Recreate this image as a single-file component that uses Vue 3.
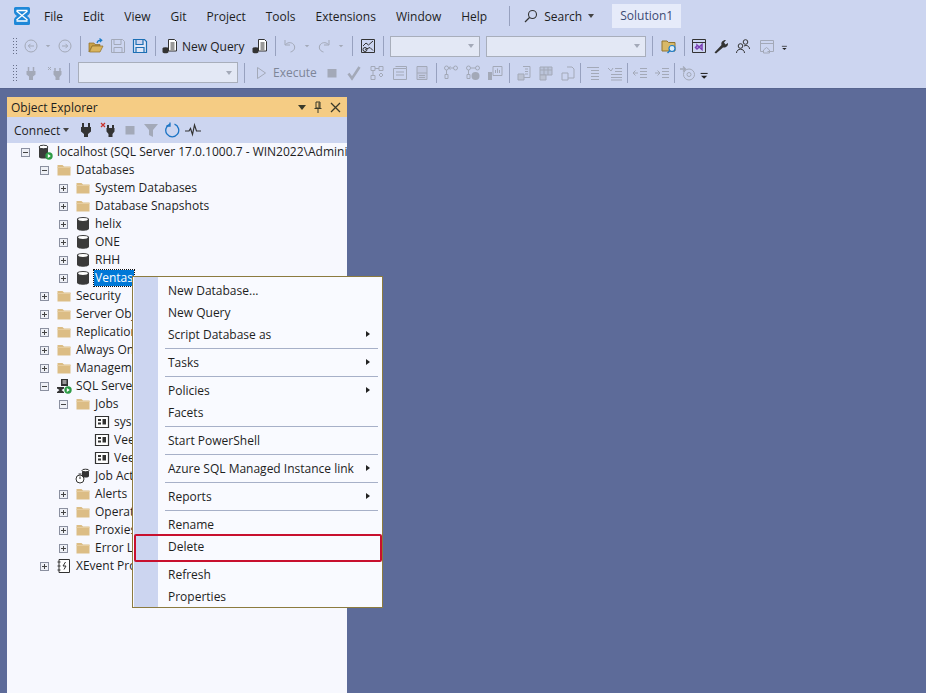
<template>
  <div class="app">
    <header class="chrome">
      <div class="menubar">
        <svg class="logo" width="18" height="20" viewBox="0 0 18 20" v-html="icons.logo"></svg>
        <nav class="menus">
          <span v-for="m in menus" :key="m">{{ m }}</span>
        </nav>
        <i class="vsep"></i>
        <div class="search">
          <svg width="14" height="14" viewBox="0 0 14 14" v-html="icons.search"></svg>
          <span>Search</span>
          <b class="caret"></b>
        </div>
        <div class="solution">Solution1</div>
      </div>
      <div v-for="(row, r) in toolbars" :key="r" class="toolrow">
        <template v-for="(t, n) in row" :key="n">
          <i v-if="t.sep" class="tsep" :style="{ width: t.sep + 'px' }"></i>
          <span v-else-if="t.grip" class="grip"></span>
          <span v-else-if="t.combo" class="combo" :style="{ width: t.combo + 'px', marginLeft: (t.ml || 0) + 'px' }">
            <em>{{ t.label }}</em><b class="caret"></b>
          </span>
          <span v-else-if="t.text" class="ttext" :class="{ dim: t.dim }" :style="{ width: t.w + 'px' }">{{ t.text }}</span>
          <span v-else class="tbtn" :style="{ width: (t.w || 22) + 'px' }">
            <svg :width="t.s || 16" :height="t.s || 16" viewBox="0 0 16 16" v-html="icons[t.i]"></svg>
          </span>
        </template>
      </div>
    </header>

    <section class="explorer">
      <div class="titlebar">
        <span>Object Explorer</span>
        <div class="winbtns">
          <b class="caret dark"></b>
          <svg width="10" height="12" viewBox="0 0 10 12" fill="none" stroke="#3a3a2a"><path d="M3 1h4v6H3zM1.500 7.500h7M5 8v4M6 1.500v5"/></svg>
          <svg width="11" height="11" viewBox="0 0 11 11" fill="none" stroke="#3a3a2a" stroke-width="1.300"><path d="M1 1l9 9M10 1l-9 9"/></svg>
        </div>
      </div>
      <div class="oetools">
        <span class="connect">Connect</span><b class="caret"></b>
        <svg class="oe" style="margin-left: 9px" width="16" height="16" viewBox="0 0 16 16" v-html="icons.plug"></svg>
        <svg class="oe" width="18" height="16" viewBox="0 0 16 16" v-html="icons.plugx"></svg>
        <svg class="oe" width="16" height="16" viewBox="0 0 16 16" v-html="icons.stop"></svg>
        <svg class="oe" width="16" height="16" viewBox="0 0 16 16" v-html="icons.filter"></svg>
        <svg class="oe" width="16" height="16" viewBox="0 0 16 16" v-html="icons.refresh"></svg>
        <svg class="oe" width="16" height="16" viewBox="0 0 16 16" v-html="icons.pulse"></svg>
      </div>
      <ul class="tree">
        <li v-for="n in tree" :key="n.label" class="node" :style="{ paddingLeft: 14 + n.lv * 19 + 'px' }">
          <span class="exp" :class="{ none: !n.exp }">
            <svg v-if="n.exp" width="9" height="9" viewBox="0 0 9 9">
              <path d="M2 4.500h5" stroke="#444" />
              <path v-if="n.exp === 'plus'" d="M4.500 2v5" stroke="#444" />
            </svg>
          </span>
          <svg class="nicon" width="16" height="16" viewBox="0 0 16 16" v-html="icons[n.icon]"></svg>
          <span class="label" :class="{ selected: n.selected }">{{ n.label }}</span>
        </li>
      </ul>
    </section>

    <div class="ctxmenu">
      <template v-for="item in ctx" :key="item.label || item.id">
        <div v-if="item.sep" class="ctxsep"></div>
        <div v-else class="ctxitem">
          <span>{{ item.label }}</span>
          <b v-if="item.sub" class="arrow"></b>
          <div v-if="item.mark" class="redbox"></div>
        </div>
      </template>
    </div>
  </div>
</template>

<script setup>
const menus = ["File", "Edit", "View", "Git", "Project", "Tools", "Extensions", "Window", "Help"];

const g = "#a3a9b8";
const icons = {
  logo: `<path d="M2.500 1h13a1.500 1.500 0 0 1 1.500 1.500V6c0 1.600-1.500 3-3 4 1.500 1 3 2.400 3 4v3.500a1.500 1.500 0 0 1-1.500 1.500h-13A1.500 1.500 0 0 1 1 17.500V14c0-1.600 1.500-3 3-4-1.500-1-3-2.400-3-4V2.500A1.500 1.500 0 0 1 2.500 1z" fill="#1e88d8"/><path d="M3.500 5l11 9M14.500 5l-11 9M3.500 4.500h11M3.500 15h11" stroke="#fff" stroke-width="1.300" fill="none"/>`,
  search: `<circle cx="8.500" cy="5.500" r="4" fill="none" stroke="#333" stroke-width="1.100"/><path d="M5.500 8.500L1 13" stroke="#333" stroke-width="1.300"/>`,
  back: `<circle cx="8" cy="8" r="6" fill="none" stroke="${g}"/><path d="M11 8H5.500M7.500 5.800L5.300 8l2.200 2.200" fill="none" stroke="${g}"/>`,
  forward: `<circle cx="8" cy="8" r="6" fill="none" stroke="${g}"/><path d="M5 8h5.500M8.500 5.800L10.700 8l-2.200 2.200" fill="none" stroke="${g}"/>`,
  drop: `<path d="M5 6.500h6L8 9.500z" fill="#6b7286"/>`,
  dropdim: `<path d="M5 6.500h6L8 9.500z" fill="${g}"/>`,
  open: `<path d="M1 14V5h5l1 1.500h5V8H4L1 14z" fill="#c9a24a" stroke="#8f6f22" stroke-width=".7"/><path d="M1.500 14L4.200 8H15l-3 6z" fill="#d9b45e" stroke="#8f6f22" stroke-width=".7"/><path d="M9 5c.5-1.800 2-2.800 4-2.800M11.500 .5l2.300 1.700-2 2" fill="none" stroke="#1c7cc8" stroke-width="1.200"/>`,
  save: `<path d="M1.500 1.500h11l2 2v11h-13zM4 1.500v5h7v-5M4 14.500v-5h8v5" fill="none" stroke="${g}"/>`,
  saveall: `<path d="M1.500 1.500h11l2 2v11h-13zM4 1.500v5h7v-5M4 14.500v-5h8v5" fill="#dfe6f7" stroke="#1c6fb4" stroke-width="1.200"/>`,
  query: `<path d="M6.500 1.500h6l2 2v9.500h-8z" fill="#fff" stroke="#333"/><path d="M8.500 5h4M8.500 7h4M8.500 9h4M8.500 11h4" stroke="#333"/><ellipse cx="3.500" cy="10.500" rx="3" ry="1.300" fill="#333"/><path d="M.5 10.500v3.500c0 1.800 6 1.800 6 0v-3.500z" fill="#333"/>`,
  undo: `<path d="M3 2v5h5M3.500 6.500c3-3 7-2 8.500 .5s.5 6-3.500 7" fill="none" stroke="${g}"/>`,
  redo: `<path d="M13 2v5H8M12.500 6.500c-3-3-7-2-8.500 .5s-.5 6 3.500 7" fill="none" stroke="${g}"/>`,
  activity: `<path d="M1.500 1.500h13v13h-13z" fill="none" stroke="#333"/><path d="M3 8l3-3 2.500 2L13 3" fill="none" stroke="#333"/><circle cx="5" cy="11.500" r="2" fill="none" stroke="#333"/><path d="M5 11.500l5-2 3 3" fill="none" stroke="#333"/>`,
  find: `<path d="M1 3h5l1.500 1.500H14V13H1z" fill="#d8b968" stroke="#8f7430"/><circle cx="11" cy="10.500" r="3" fill="#dcecfa" stroke="#1c7cc8" stroke-width="1.200"/><path d="M9 12.500l-2.500 2.500" stroke="#1c7cc8" stroke-width="1.400"/>`,
  vs: `<path d="M1.500 1.500h13v13h-13zM1.500 4.500h13" fill="none" stroke="#333"/><path d="M6 7l5 4.500V6.500L6 11 4.500 9.500 6 8z" fill="none" stroke="#7a3fb5" stroke-width="1.500"/>`,
  wrench: `<path d="M1.500 14.500l7-7.500c-.8-2.500 1-5 4.500-5l-2 2.500 1.500 2 2.500-1.500c.3 3-2 5-5 4.500l-7 6z" fill="#333"/>`,
  users: `<circle cx="5.500" cy="8" r="2.300" fill="none" stroke="#333"/><path d="M1.500 15c0-5 8-5 8 0" fill="none" stroke="#333"/><circle cx="10.500" cy="4" r="2.300" fill="none" stroke="#333"/><path d="M9 8c3-1.500 5.500 .5 5.500 3" fill="none" stroke="#333"/>`,
  home: `<path d="M1.500 2.500h13v11h-6M1.500 5.500h13M1.500 2.500v11h3" fill="none" stroke="${g}"/><path d="M4.500 12l3-2.500 3 2.500v3h-6z" fill="none" stroke="${g}"/>`,
  overflow: `<path d="M3 8.500h8" stroke="#222" stroke-width="1.200"/><path d="M3.500 11h7L7 14.500z" fill="#222"/>`,
  plug: `<path d="M5 1v4M11 1v4" stroke="#333" stroke-width="2"/><path d="M3 5h10v4.500L10 12v3H6v-3L3 9.500z" fill="#333"/>`,
  plugdim: `<path d="M5.500 2v4M10.500 2v4" stroke="${g}" stroke-width="1.500"/><path d="M3.500 6h9v3.500L10 11.500V15H6v-3.500L3.500 9.500z" fill="${g}"/>`,
  plugx: `<path d="M1 1l4 4M5 1L1 5" stroke="#c8322c" stroke-width="1.200"/><path d="M8 3v3M13 3v3" stroke="#333" stroke-width="2"/><path d="M6.500 6h8v3.500L12.500 12v3h-4v-3L6.500 9.500z" fill="#333"/>`,
  plugxdim: `<path d="M1 2l3 3M4 2L1 5" stroke="${g}"/><path d="M8 3v3M13 3v3" stroke="${g}" stroke-width="1.500"/><path d="M6.500 6h8v3.500L12.500 12v3h-4v-3L6.500 9.500z" fill="${g}"/>`,
  play: `<path d="M4.500 2.500l8 5.500-8 5.500z" fill="none" stroke="${g}"/>`,
  stop: `<path d="M3.500 4h9v8.500h-9z" fill="${g}"/>`,
  check: `<path d="M2.500 8.500l3.500 5L13.500 2" fill="none" stroke="${g}" stroke-width="2.600"/>`,
  tree1: `<path d="M2 1.500h4v4H2zM10 1.500h4v4h-4zM2 10.500h4v4H2zM10 10l2 2 2-2-2-2z" fill="none" stroke="${g}"/><path d="M6 3.500h4M4 5.500v5" stroke="${g}"/>`,
  grid1: `<path d="M1.500 3.500h13v11h-13zM3.500 1.500h11v2M4 7h8M4 10h8" fill="none" stroke="${g}"/>`,
  form: `<path d="M3 1.500h10v13H3zM3 8h10M5 10.500h6M5 12.500h6" fill="${g}" fill-opacity=".25" stroke="${g}"/>`,
  link1: `<circle cx="3.500" cy="3" r="2" fill="none" stroke="${g}"/><circle cx="12.500" cy="3" r="2" fill="none" stroke="${g}"/><path d="M5.500 3h5M7.500 1.500l-2 1.500 2 1.500M3.500 5v4" fill="none" stroke="${g}"/><path d="M2 9.500h3v4H2z" fill="none" stroke="${g}"/>`,
  link2: `<circle cx="3.500" cy="3" r="2" fill="none" stroke="${g}"/><circle cx="12.500" cy="3" r="2" fill="none" stroke="${g}"/><path d="M5.500 3h5M3.500 5v4M2 9.500h3v4H2z" fill="none" stroke="${g}"/><circle cx="10.500" cy="11" r="4" fill="${g}"/>`,
  chart: `<path d="M1 7h4v8H1z" fill="${g}"/><path d="M6 1.500h9v9H6zM8.500 8V5M10.500 8V3.500M12.500 8V5" fill="none" stroke="${g}"/>`,
  t1: `<path d="M7 1.500h7v11H7M9 4h3M9 6.500h3M9 9h3" fill="none" stroke="${g}"/><path d="M2 9h6v6H2z" fill="#bcc2d2" stroke="${g}"/>`,
  t2: `<path d="M2 2h12v8H2zM2 5h12M6 2v8M10 2v8" fill="${g}" fill-opacity=".4" stroke="${g}"/><path d="M2 10h6v5H2z" fill="#bcc2d2" stroke="${g}"/>`,
  t3: `<path d="M7 2h5l2 2v9H8" fill="none" stroke="${g}"/><path d="M2 8h6v7H2z" fill="none" stroke="${g}"/>`,
  lines1: `<path d="M2 2.500h12M6 5.500h8M6 8.500h8M6 11.500h8M6 14.500h8" stroke="${g}"/>`,
  lines2: `<path d="M1 3l3 3 2-3M8 3.500h7M8 6.500h7M4 9.500h11M4 12.500h11M4 15h11" fill="none" stroke="${g}"/>`,
  outdent: `<path d="M1 8h5M3.500 5.500L1 8l2.500 2.500M8 3.500h7M8 6.500h7M8 9.500h7M8 12.500h7" fill="none" stroke="${g}"/>`,
  indent: `<path d="M1 8h5M3.500 5.500L6 8l-2.500 2.500M8 3.500h7M8 6.500h7M8 9.500h7M8 12.500h7" fill="none" stroke="${g}"/>`,
  at: `<path d="M1 4h5M4 1.500L6.500 4 4 6.500" fill="none" stroke="${g}" stroke-width="1.300"/><circle cx="10" cy="9.500" r="5.500" fill="none" stroke="${g}"/><circle cx="10" cy="9.500" r="2" fill="none" stroke="${g}"/>`,
  folder: `<path d="M1.500 3h5l1.500 1.500h6.500v9h-13z" fill="#dcbd85" /><path d="M1.500 5.500h13" stroke="#e6cda0"/>`,
  db: `<path d="M2 4v8.500C2 15.500 14 15.500 14 12.500V4z" fill="#3a3a3a"/><ellipse cx="8" cy="3.500" rx="5.500" ry="2" fill="#fff" stroke="#3a3a3a" stroke-width="1.200"/>`,
  server: `<path d="M2 3v10c0 2 9 2 9 0V3z" fill="#3a3a3a"/><ellipse cx="6.500" cy="3" rx="4.500" ry="1.800" fill="#fff" stroke="#3a3a3a"/><circle cx="12" cy="12" r="3.700" fill="#2e9b46"/><path d="M10.800 10l3 2-3 2z" fill="#fff"/>`,
  agent: `<path d="M5 1h7v7H5z" fill="#333"/><path d="M6.500 3h4M6.500 5h4" stroke="#fff"/><path d="M1 9h7v1.500L5.500 12 8 14v1H1v-1l2.500-2L1 10.500z" fill="#333"/><circle cx="12" cy="12" r="3.700" fill="#2e9b46"/><path d="M10.800 10l3 2-3 2z" fill="#fff"/>`,
  job: `<path d="M1.500 2.500h13v11h-13z" fill="#fff" stroke="#333" stroke-width="1.200"/><path d="M4 5h3v2H4zM4 8.500h3v2H4zM8.500 5h3.500v5.500H8.500z" fill="#333"/>`,
  monitor: `<circle cx="5" cy="11" r="4" fill="#fff" stroke="#333"/><path d="M5 11V8.500M3.500 6h3" stroke="#333"/><path d="M7 2v6c0 2 7 2 7 0V2z" fill="#333"/><ellipse cx="10.500" cy="2.500" rx="3.500" ry="1.300" fill="#fff" stroke="#333"/>`,
  xevent: `<path d="M3 1.500h10.500v13H3zM1.500 4h3M1.500 8h3M1.500 12h3" fill="#fff" stroke="#333"/><path d="M9.500 4L7 8h3l-2 3.500" fill="none" stroke="#333"/>`,
  refresh: `<path d="M6 2.200a6.500 6.500 0 1 0 4.500 0" fill="none" stroke="#1c74c4" stroke-width="1.300"/><path d="M6 .5v3.500H2.500" fill="none" stroke="#1c74c4" stroke-width="1.300"/>`,
  filter: `<path d="M1 2h14l-5 6v7l-4-2V8z" fill="${g}"/>`,
  pulse: `<path d="M0 9h4l1.500-2.500 2 6 2-9.500 2 6H16" fill="none" stroke="#333" stroke-width="1.200"/>`,
};

const toolbars = [
  [
    { grip: 1 }, { i: "back" }, { i: "dropdim", w: 12 }, { i: "forward" }, { sep: 9 },
    { i: "open" }, { i: "save" }, { i: "saveall" }, { sep: 8 }, { i: "query" },
    { text: "New Query", w: 68 }, { i: "query" }, { sep: 8 }, { i: "undo" }, { i: "dropdim", w: 12 },
    { i: "redo" }, { i: "dropdim", w: 12 }, { sep: 10 }, { i: "activity" }, { sep: 8 },
    { combo: 90, ml: 3 }, { combo: 160, ml: 6 }, { sep: 12 }, { i: "find", w: 22 }, { sep: 8 },
    { i: "vs" }, { i: "wrench" }, { i: "users" }, { i: "home", w: 26 }, { i: "overflow", w: 10 },
  ],
  [
    { grip: 1 }, { i: "plugdim" }, { i: "plugxdim", w: 26 }, { sep: 3 }, { combo: 160, ml: 7 }, { sep: 12 },
    { i: "play", w: 22 }, { text: "Execute", w: 49, dim: 1 }, { i: "stop", w: 22 }, { i: "check" }, { i: "tree1", w: 24 },
    { i: "grid1" }, { i: "form", w: 22 }, { sep: 7 }, { i: "link1" }, { i: "link2" }, { i: "chart" }, { sep: 7 },
    { i: "t1" }, { i: "t2" }, { i: "t3" }, { sep: 3 }, { i: "lines1" }, { i: "lines2" }, { sep: 3 },
    { i: "outdent" }, { i: "indent" }, { sep: 3 }, { i: "at" }, { i: "overflow", w: 14 },
  ],
];

const f = "folder";
const tree = [
  { lv: 0, exp: "minus", icon: "server", label: "localhost (SQL Server 17.0.1000.7 - WIN2022\\Administrator)" },
  { lv: 1, exp: "minus", icon: f, label: "Databases" },
  { lv: 2, exp: "plus", icon: f, label: "System Databases" },
  { lv: 2, exp: "plus", icon: f, label: "Database Snapshots" },
  { lv: 2, exp: "plus", icon: "db", label: "helix" },
  { lv: 2, exp: "plus", icon: "db", label: "ONE" },
  { lv: 2, exp: "plus", icon: "db", label: "RHH" },
  { lv: 2, exp: "plus", icon: "db", label: "Ventas", selected: true },
  { lv: 1, exp: "plus", icon: f, label: "Security" },
  { lv: 1, exp: "plus", icon: f, label: "Server Objects" },
  { lv: 1, exp: "plus", icon: f, label: "Replication" },
  { lv: 1, exp: "plus", icon: f, label: "Always On High Availability" },
  { lv: 1, exp: "plus", icon: f, label: "Management" },
  { lv: 1, exp: "minus", icon: "agent", label: "SQL Server Agent" },
  { lv: 2, exp: "minus", icon: f, label: "Jobs" },
  { lv: 3, icon: "job", label: "syspolicy_purge_history" },
  { lv: 3, icon: "job", label: "Veeam Backup" },
  { lv: 3, icon: "job", label: "Veeam Log Backup" },
  { lv: 2, icon: "monitor", label: "Job Activity Monitor" },
  { lv: 2, exp: "plus", icon: f, label: "Alerts" },
  { lv: 2, exp: "plus", icon: f, label: "Operators" },
  { lv: 2, exp: "plus", icon: f, label: "Proxies" },
  { lv: 2, exp: "plus", icon: f, label: "Error Logs" },
  { lv: 1, exp: "plus", icon: "xevent", label: "XEvent Profiler" },
];

const ctx = [
  { label: "New Database..." },
  { label: "New Query" },
  { label: "Script Database as", sub: true },
  { sep: true, id: "s1" },
  { label: "Tasks", sub: true },
  { sep: true, id: "s2" },
  { label: "Policies", sub: true },
  { label: "Facets" },
  { sep: true, id: "s3" },
  { label: "Start PowerShell" },
  { sep: true, id: "s4" },
  { label: "Azure SQL Managed Instance link", sub: true },
  { sep: true, id: "s5" },
  { label: "Reports", sub: true },
  { sep: true, id: "s6" },
  { label: "Rename" },
  { label: "Delete", mark: true },
  { sep: true, id: "s7" },
  { label: "Refresh" },
  { label: "Properties" },
];
</script>

<style scoped>
.app {
  position: relative;
  width: 926px;
  height: 693px;
  overflow: hidden;
  background: #5d6b99;
  font-family: "Open Sans", "Noto Sans", sans-serif;
  font-size: 12px;
  color: #1e1e1e;
}
.chrome {
  height: 89px;
  box-sizing: border-box;
  background: #ccd5f0;
  border-bottom: 1px solid #56648f;
}
.menubar {
  display: flex;
  align-items: center;
  height: 32px;
  padding-left: 13px;
}
.logo {
  margin-right: 13px;
}
.menus {
  display: flex;
  gap: 20px;
}
.vsep {
  width: 1px;
  height: 20px;
  margin: 0 14px 0 22px;
  background: #97a1bf;
}
.search {
  display: flex;
  align-items: center;
  gap: 6px;
  width: 88px;
}
.solution {
  padding: 0 8px;
  height: 24px;
  line-height: 24px;
  background: #e6ebfa;
  color: #3c4a73;
}
.caret {
  display: inline-block;
  width: 0;
  height: 0;
  border: 3.500px solid transparent;
  border-top: 4px solid #444;
  border-bottom: 0;
}
.caret.dark {
  border-top-color: #3a3a2a;
  border-left-width: 4.500px;
  border-right-width: 4.500px;
  border-top-width: 5px;
}
.toolrow {
  display: flex;
  align-items: center;
  height: 25px;
  padding-left: 8px;
}
.toolrow:nth-of-type(2) {
  height: 28px;
}
.grip {
  width: 6px;
  height: 18px;
  margin: 0 2px 0 4px;
  background-image: radial-gradient(circle, #68708a 1px, transparent 1px);
  background-size: 3px 3px;
}
.tsep {
  display: flex;
  flex: none;
  position: relative;
  height: 20px;
  background: linear-gradient(#97a1bf, #97a1bf) center / 1px 100% no-repeat;
}
.tbtn {
  display: flex;
  flex: none;
  align-items: center;
  justify-content: center;
}
.ttext {
  flex: none;
  white-space: nowrap;
  padding-left: 1px;
  box-sizing: border-box;
}
.ttext.dim {
  color: #7d8597;
}
.combo {
  display: flex;
  flex: none;
  align-items: center;
  justify-content: space-between;
  box-sizing: border-box;
  height: 21px;
  padding: 0 5px 0 3px;
  background: #e3e8f5;
  border: 1px solid #a8aebb;
}
.combo em {
  font-style: normal;
  color: #8a90a0;
}
.combo .caret {
  border-top-color: #a3a9b8;
}
.explorer {
  width: 340px;
  height: 596px;
  margin: 8px 0 0 7px;
  display: flex;
  flex-direction: column;
  background: #f7f8fe;
  overflow: hidden;
}
.titlebar {
  display: flex;
  flex: none;
  align-items: center;
  justify-content: space-between;
  height: 20px;
  padding: 0 6px 0 4px;
  background: #f5cc84;
}
.winbtns {
  display: flex;
  align-items: center;
  gap: 7px;
}
.oetools {
  display: flex;
  flex: none;
  align-items: center;
  height: 26px;
  padding-left: 7px;
  background: #ccd5f0;
}
.connect {
  margin-right: 3px;
}
.oe {
  margin-right: 5px;
}
.tree {
  list-style: none;
  margin: 0;
  padding: 0;
}
.node {
  display: flex;
  align-items: center;
  height: 18px;
  white-space: nowrap;
}
.exp {
  display: flex;
  flex: none;
  box-sizing: border-box;
  width: 9px;
  height: 9px;
  background: #eef0f6;
  outline: 1px solid #8b90a0;
  outline-offset: -1px;
}
.exp.none {
  background: none;
  outline: 0;
}
.nicon {
  flex: none;
  margin: 0 3px 0 7px;
}
.label {
  padding: 0 1px;
  line-height: 16px;
}
.label.selected {
  background: #0078d7;
  color: #fff;
  outline: 1px dotted #111;
}
.ctxmenu {
  position: absolute;
  left: 132px;
  top: 276px;
  box-sizing: border-box;
  width: 251px;
  height: 332px;
  padding: 2px 1px;
  background: #f9faff linear-gradient(#ccd5f0, #ccd5f0) 1px 0 / 24px 100% no-repeat;
  background-clip: padding-box;
  border: 1px solid #8c7b3f;
}
.ctxitem {
  position: relative;
  display: flex;
  align-items: center;
  justify-content: space-between;
  height: 22px;
  padding: 0 11px 0 34px;
}
.arrow {
  width: 0;
  height: 0;
  border: 3.500px solid transparent;
  border-left: 4px solid #222;
  border-right: 0;
}
.ctxsep {
  height: 1px;
  margin: 2.500px 3px 2.500px 31px;
  background: #a7b0c8;
}
.redbox {
  position: absolute;
  left: 0;
  right: -1px;
  top: -1px;
  height: 28px;
  box-sizing: border-box;
  border: 2px solid #c8102e;
  border-radius: 2px;
}
</style>
